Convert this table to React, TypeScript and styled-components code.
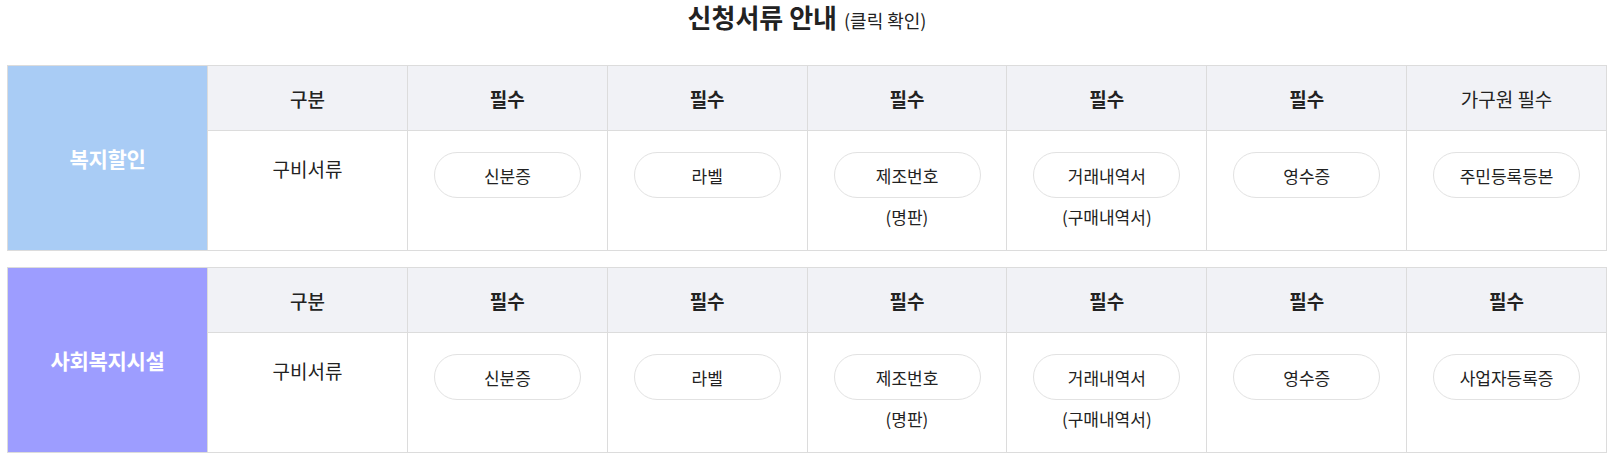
import React from "react";
import styled, { createGlobalStyle } from "styled-components";

const GlobalStyle = createGlobalStyle`
  html, body {
    margin: 0;
    padding: 0;
    background: #ffffff;
  }
  body {
    font-family: "Noto Sans CJK KR", "Noto Sans", sans-serif;
    color: #222222;
  }
`;

const Page = styled.div`
  width: 1600px;
  margin-left: 7px;
  display: flex;
  flex-direction: column;
  gap: 16px;
`;

const Title = styled.h2`
  margin: 0 0 12px;
  text-align: center;
  font-size: 26px;
  line-height: 34px;
  font-weight: 700;
  color: #222222;
  letter-spacing: 0;
`;

const TitleNote = styled.span`
  font-size: 18px;
  font-weight: 400;
  margin-left: 7px;
  letter-spacing: 0;
`;

const Table = styled.table`
  width: 1600px;
  border-collapse: collapse;
  table-layout: fixed;
  border: 1px solid #dcdcdc;
`;

const LabelCell = styled.th<{ $bg: string }>`
  width: 199px;
  background: ${(p) => p.$bg};
  color: #ffffff;
  font-size: 21px;
  font-weight: 700;
  letter-spacing: -0.3px;
  border: 1px solid #dcdcdc;
  text-align: center;
  vertical-align: middle;
  padding: 0;
`;

const HeadCell = styled.th<{ $weight: number }>`
  height: 64px;
  background: #f1f2f6;
  border: 1px solid #dcdcdc;
  font-size: 19px;
  font-weight: ${(p) => p.$weight};
  color: #222222;
  text-align: center;
  vertical-align: middle;
  padding: 0;
`;

const BodyCell = styled.td`
  border: 1px solid #dcdcdc;
  vertical-align: top;
  text-align: center;
  padding: 21px 26px 20px;
`;

const PlainText = styled.div`
  font-size: 19px;
  line-height: 27px;
  padding-top: 3px;
  color: #222222;
`;

const Pill = styled.button`
  display: flex;
  align-items: center;
  justify-content: center;
  width: 147px;
  height: 46px;
  margin: 0 auto;
  padding: 0;
  border: 1px solid #e2e2e2;
  border-radius: 23px;
  background: #ffffff;
  font-family: inherit;
  font-size: 17px;
  color: #222222;
  cursor: pointer;
`;

const SubText = styled.div`
  margin-top: 5px;
  font-size: 17px;
  line-height: 27px;
  color: #222222;
`;

type Doc = { name: string; sub?: string };

type Section = {
  label: string;
  color: string;
  heads: { text: string; weight: number }[];
  docs: Doc[];
};

const baseHeads = [
  { text: "필수", weight: 700 },
  { text: "필수", weight: 700 },
  { text: "필수", weight: 700 },
  { text: "필수", weight: 700 },
  { text: "필수", weight: 700 },
];

const sections: Section[] = [
  {
    label: "복지할인",
    color: "#a9ccf5",
    heads: [...baseHeads, { text: "가구원 필수", weight: 400 }],
    docs: [
      { name: "신분증" },
      { name: "라벨" },
      { name: "제조번호", sub: "(명판)" },
      { name: "거래내역서", sub: "(구매내역서)" },
      { name: "영수증" },
      { name: "주민등록등본" },
    ],
  },
  {
    label: "사회복지시설",
    color: "#9d9dff",
    heads: [...baseHeads, { text: "필수", weight: 700 }],
    docs: [
      { name: "신분증" },
      { name: "라벨" },
      { name: "제조번호", sub: "(명판)" },
      { name: "거래내역서", sub: "(구매내역서)" },
      { name: "영수증" },
      { name: "사업자등록증" },
    ],
  },
];

export default function App() {
  return (
    <>
      <GlobalStyle />
      <Page>
        <Title>
          신청서류 안내<TitleNote>(클릭 확인)</TitleNote>
        </Title>
        {sections.map((s) => (
          <Table key={s.label}>
            <tbody>
              <tr>
                <LabelCell $bg={s.color} rowSpan={2}>
                  {s.label}
                </LabelCell>
                <HeadCell $weight={500}>구분</HeadCell>
                {s.heads.map((h, i) => (
                  <HeadCell key={i} $weight={h.weight}>
                    {h.text}
                  </HeadCell>
                ))}
              </tr>
              <tr>
                <BodyCell>
                  <PlainText>구비서류</PlainText>
                </BodyCell>
                {s.docs.map((d, i) => (
                  <BodyCell key={i}>
                    <Pill type="button">{d.name}</Pill>
                    {d.sub && <SubText>{d.sub}</SubText>}
                  </BodyCell>
                ))}
              </tr>
            </tbody>
          </Table>
        ))}
      </Page>
    </>
  );
}
